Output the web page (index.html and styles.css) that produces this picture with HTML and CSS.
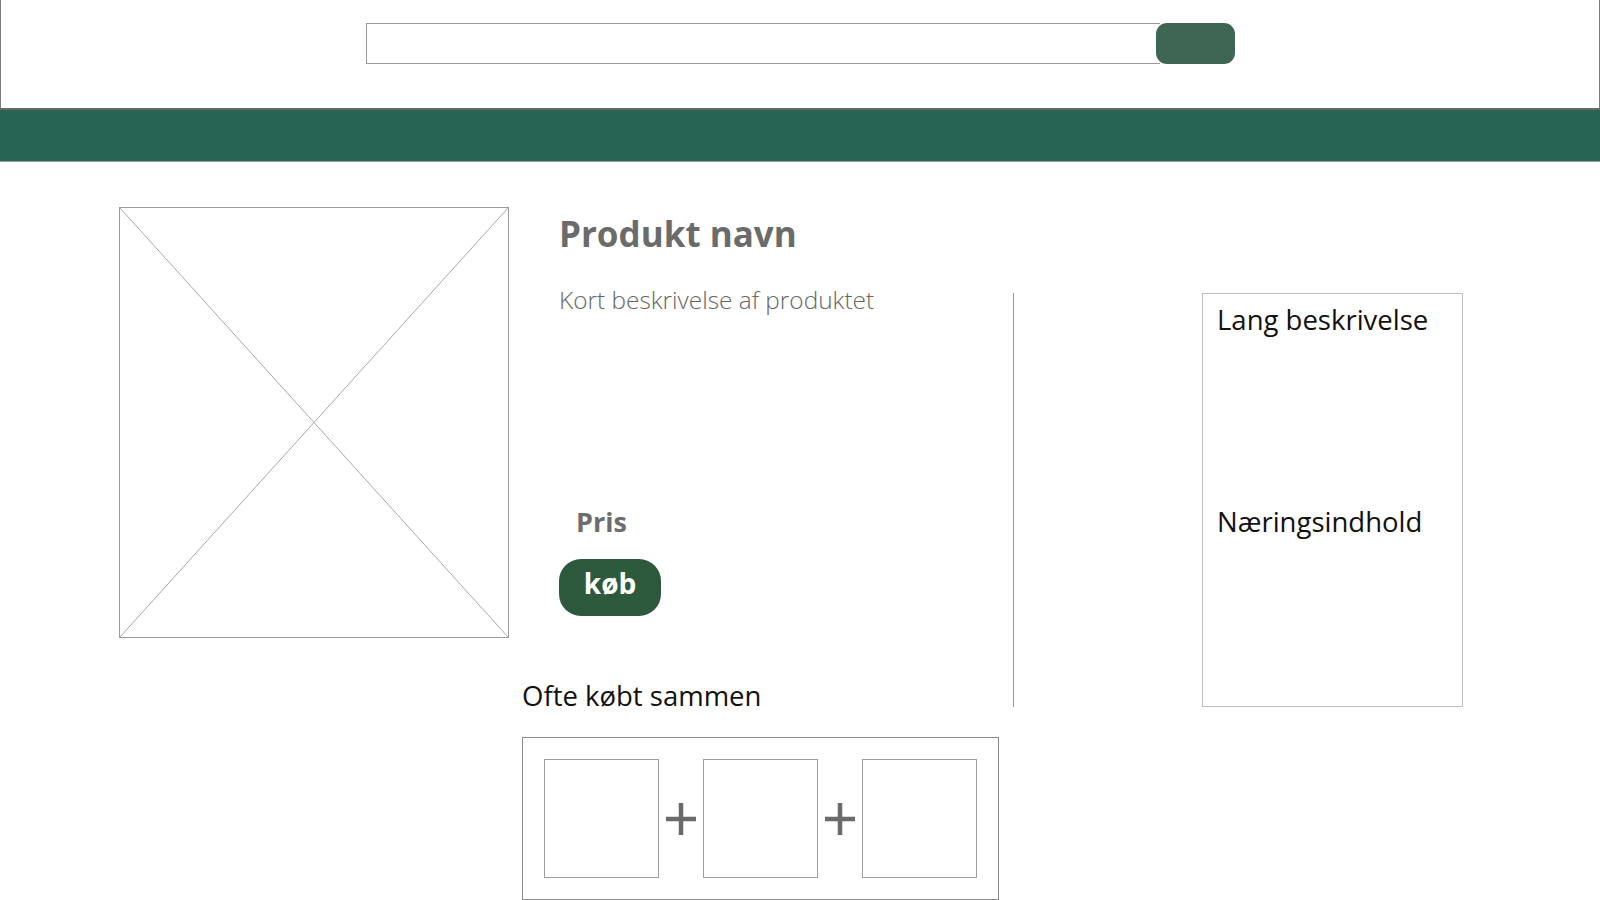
FILE: index.html
```html
<!DOCTYPE html>
<html lang="da">
<head>
<meta charset="utf-8">
<title>Produkt</title>
<link rel="stylesheet" href="styles.css">
</head>
<body>
<header class="topbar">
  <form class="search">
    <input class="search-input" type="text" aria-label="Søg">
    <button class="search-btn" type="button" aria-label="Søg"></button>
  </form>
</header>
<nav class="navbar"></nav>
<main class="product">
  <div class="left">
    <div class="top-row">
      <div class="image-ph">
        <svg class="x" viewBox="0 0 100 100" preserveAspectRatio="none">
          <line x1="0" y1="0" x2="100" y2="100" vector-effect="non-scaling-stroke"/>
          <line x1="100" y1="0" x2="0" y2="100" vector-effect="non-scaling-stroke"/>
        </svg>
      </div>
      <div class="info">
        <h1 class="name">Produkt navn</h1>
        <p class="short">Kort beskrivelse af produktet</p>
        <p class="price">Pris</p>
        <button class="buy" type="button">køb</button>
      </div>
    </div>
    <section class="together">
      <h2 class="together-title">Ofte købt sammen</h2>
      <div class="together-box">
        <div class="thumb"></div>
        <div class="plus"><svg viewBox="0 0 30 32"><path d="M0 16H30M15 0V32"/></svg></div>
        <div class="thumb"></div>
        <div class="plus"><svg viewBox="0 0 30 32"><path d="M0 16H30M15 0V32"/></svg></div>
        <div class="thumb"></div>
      </div>
    </section>
  </div>
  <div class="divider"></div>
  <aside class="details">
    <p class="details-text">Lang beskrivelse</p>
    <p class="details-text nutrition">Næringsindhold</p>
  </aside>
</main>
</body>
</html>
```

FILE: styles.css
```css
* { box-sizing: border-box; }

html, body {
  margin: 0;
  padding: 0;
  background: #fff;
}

body {
  font-family: "Open Sans", "Noto Sans", "Liberation Sans", sans-serif;
  color: #111;
  width: 1600px;
  height: 900px;
  overflow: hidden;
}

.topbar {
  height: 108px;
  border-left: 1px solid #808080;
  border-right: 1px solid #808080;
  display: flex;
  justify-content: center;
  padding-top: 23px;
}

.search {
  display: flex;
  width: 869px;
  height: 41px;
  margin: 0;
}

.search-input {
  flex: 1;
  height: 41px;
  border: 1px solid #9a9a9a;
  border-right: none;
  margin: 0;
  padding: 0 10px;
  outline: none;
  background: #fff;
}

.search-btn {
  width: 79px;
  height: 41px;
  margin: 0 0 0 -4px;
  border: none;
  border-radius: 11px;
  background: #3f6655;
  padding: 0;
}

.navbar {
  height: 54px;
  background: #286453;
  border-top: 2px solid #666;
  border-bottom: 1px solid #9a9a9a;
}

.product {
  display: flex;
  align-items: flex-start;
  padding: 45px 0 0 119px;
}

.left {
  width: 894px;
  display: flex;
  flex-direction: column;
}

.top-row {
  display: flex;
  height: 431px;
}

.image-ph {
  width: 390px;
  height: 431px;
  border: 1px solid #9c9c9c;
  flex: none;
}

.image-ph .x {
  display: block;
  width: 100%;
  height: 100%;
}

.image-ph .x line {
  stroke: #a8a8a8;
  stroke-width: 1;
}

.info {
  margin-left: 50px;
  display: flex;
  flex-direction: column;
  align-items: flex-start;
}

.name {
  margin: 3px 0 0;
  font-size: 35px;
  line-height: 48px;
  font-weight: 700;
  color: #6b6b6b;
}

.short {
  margin: 27px 0 0;
  font-size: 24.4px;
  line-height: 30px;
  font-weight: 300;
  color: #666;
}

.price {
  margin: 189px 0 0 17px;
  font-size: 27px;
  line-height: 36px;
  font-weight: 700;
  color: #6d6d6d;
}

.buy {
  margin-top: 19px;
  width: 102px;
  height: 57px;
  padding: 0 0 9px;
  border: none;
  border-radius: 22px;
  background: #2d5a3d;
  color: #fff;
  font-family: inherit;
  font-size: 28px;
  font-weight: 700;
  line-height: 47px;
}

.together {
  margin: 40px 0 0 403px;
}

.together-title {
  margin: 0;
  font-size: 27.5px;
  line-height: 36px;
  font-weight: 400;
  color: #111;
}

.together-box {
  margin-top: 23px;
  width: 477px;
  height: 163px;
  border: 1px solid #8a8a8a;
  padding: 21px;
  display: flex;
  align-items: flex-start;
}

.thumb {
  width: 115px;
  height: 119px;
  border: 1px solid #9e9e9e;
  flex: none;
}

.plus {
  width: 44px;
  height: 119px;
  display: flex;
  align-items: center;
  justify-content: center;
  flex: none;
}

.plus svg {
  width: 30px;
  height: 32px;
  display: block;
}

.plus path {
  stroke: #6a6a6a;
  stroke-width: 4.5;
  fill: none;
}

.divider {
  width: 1px;
  height: 414px;
  margin-top: 86px;
  background: #9a9a9a;
  flex: none;
}

.details {
  margin: 86px 0 0 188px;
  width: 261px;
  height: 414px;
  border: 1px solid #bdbdbd;
  padding: 8px 0 0 14px;
}

.details-text {
  margin: 0;
  font-size: 27.5px;
  line-height: 36px;
  font-weight: 400;
  color: #111;
}

.details-text.nutrition {
  margin-top: 166px;
}
```
